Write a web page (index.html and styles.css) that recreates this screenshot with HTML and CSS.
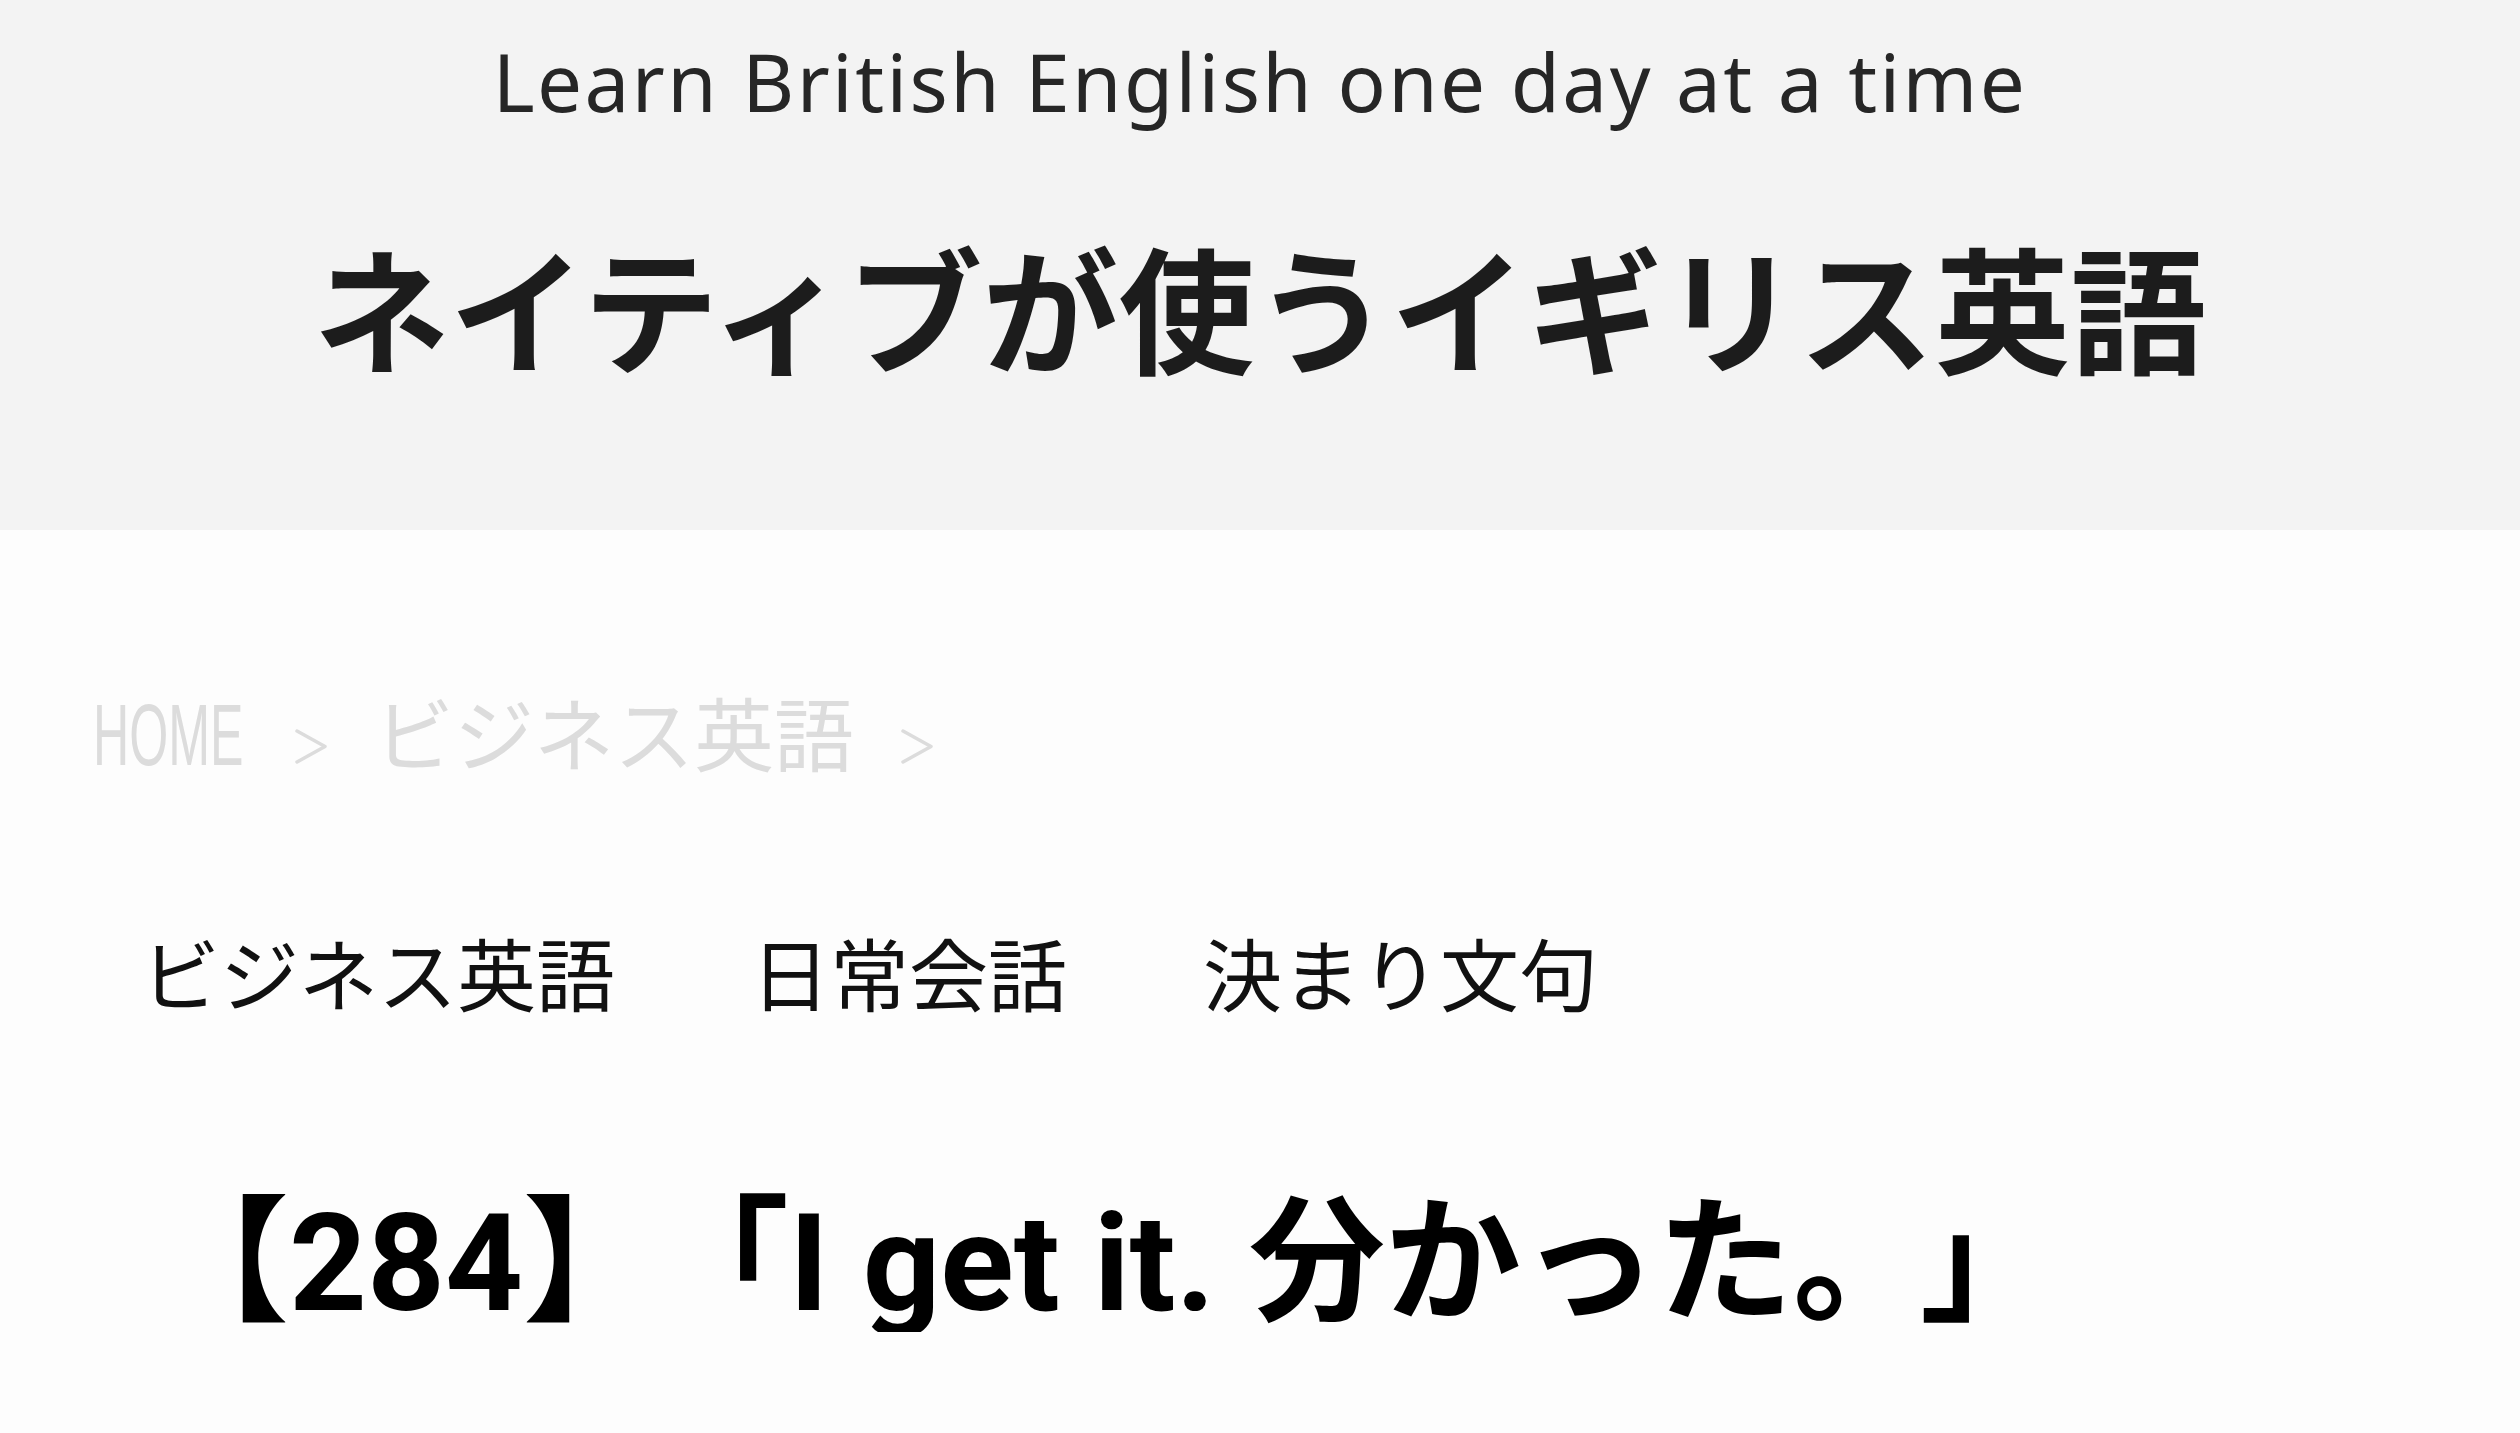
FILE: index.html
```html
<!DOCTYPE html>
<html lang="ja">
<head>
<meta charset="utf-8">
<title>ネイティブが使うイギリス英語</title>
<link rel="stylesheet" href="styles.css">
</head>
<body>
<header class="site-header">
  <p class="tagline">Learn British English one day at a time</p>
  <h1 class="site-title">ネイティブが使うイギリス英語</h1>
</header>
<main class="content">
  <nav class="breadcrumb">
    <span class="crumb-home">HOME</span>
    <svg class="crumb-sep" width="34" height="37" viewBox="0 0 34 37" aria-hidden="true"><polyline points="3,3 31,18.5 3,34" fill="none" stroke="#dcdcdc" stroke-width="3.5" stroke-linecap="round" stroke-linejoin="round"/></svg>
    <span class="crumb">ビジネス英語</span>
    <svg class="crumb-sep" width="34" height="37" viewBox="0 0 34 37" aria-hidden="true"><polyline points="3,3 31,18.5 3,34" fill="none" stroke="#dcdcdc" stroke-width="3.5" stroke-linecap="round" stroke-linejoin="round"/></svg>
  </nav>
  <ul class="categories">
    <li>ビジネス英語</li>
    <li>日常会話</li>
    <li>決まり文句</li>
  </ul>
  <h2 class="post-title">【284】<span class="q-open">「I get it. 分かった。</span><span class="q-close">」</span></h2>
</main>
</body>
</html>
```

FILE: styles.css
```css
html, body {
  margin: 0;
  padding: 0;
}
body {
  background: #fdfdfd;
  font-family: "Noto Sans CJK JP", "Noto Sans", sans-serif;
  color: #111;
}
.site-header {
  background: #f3f3f3;
  height: 530px;
  box-sizing: border-box;
  padding-top: 41px;
  text-align: center;
}
.tagline {
  margin: 0;
  font-family: "Noto Sans", sans-serif;
  font-weight: 400;
  font-size: 80px;
  line-height: 1;
  color: #262626;
  letter-spacing: 2.4px;
}
.site-title {
  margin: 116px 0 0;
  font-family: "Noto Sans CJK JP", sans-serif;
  font-weight: 700;
  font-size: 136px;
  line-height: 1;
  color: #1c1c1c;
}
.content {
  padding: 0 0 0 93px;
}
.breadcrumb {
  display: flex;
  align-items: baseline;
  gap: 46px;
  padding-top: 160px;
  font-size: 80px;
  line-height: 1;
  color: #dcdcdc;
}
.crumb-home {
  display: inline-block;
  font-family: "Liberation Sans", sans-serif;
  font-size: 88px;
  transform: scaleX(0.57);
  transform-origin: left center;
  margin-right: -109px;
}
.crumb-sep {
  display: block;
  flex: none;
}
.categories {
  list-style: none;
  margin: 0;
  padding: 153px 0 0 48px;
  display: flex;
  gap: 136px;
  font-size: 79px;
  line-height: 1;
  color: #111;
}
.categories li {
  margin: 0;
}
.post-title {
  margin: 0;
  padding: 185px 0 0 60px;
  font-family: "Roboto", "Noto Sans CJK JP", sans-serif;
  font-weight: 700;
  font-size: 136px;
  line-height: 1;
  color: #000;
}
.q-open {
  margin-left: 62px;
}
.q-close {
  margin-left: 59px;
}
```
